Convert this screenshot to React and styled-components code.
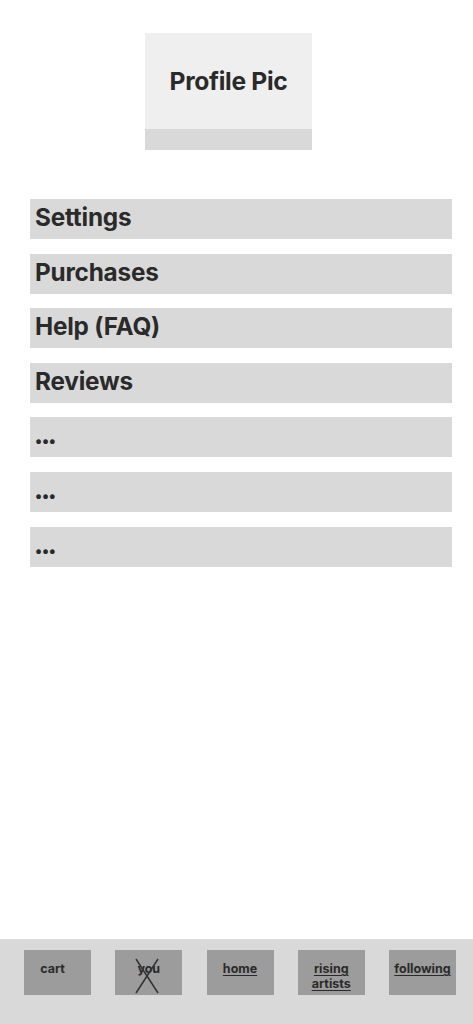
import React from "react";
import styled, { createGlobalStyle } from "styled-components";

const Global = createGlobalStyle`
  html, body {
    margin: 0;
    padding: 0;
    background: #ffffff;
    font-family: Inter, "Liberation Sans", sans-serif;
    color: #2a2a2a;
  }
`;

const Page = styled.div`
  width: 473px;
  height: 1024px;
  display: flex;
  flex-direction: column;
  overflow: hidden;
`;

const Main = styled.main`
  flex: 1;
  display: flex;
  flex-direction: column;
  align-items: flex-start;
  padding-top: 33px;
`;

const PicCard = styled.div`
  width: 167px;
  margin-left: 145px;
  display: flex;
  flex-direction: column;
`;

const PicArea = styled.div`
  height: 96px;
  background: #efefef;
  display: flex;
  align-items: center;
  justify-content: center;
  font-size: 24.6px;
  font-weight: 700;
  letter-spacing: -0.3px;
`;

const PicFooter = styled.div`
  height: 21px;
  background: #d9d9d9;
`;

const Menu = styled.ul`
  list-style: none;
  margin: 49px 0 0 30px;
  padding: 0;
  width: 422px;
  display: flex;
  flex-direction: column;
  gap: 14.6px;
`;

const MenuItem = styled.li`
  height: 40px;
  background: #d9d9d9;
  box-sizing: border-box;
  padding: 0 5px;
  display: flex;
  align-items: ${(p) => (p.more ? "flex-end" : "center")};
  padding-bottom: ${(p) => (p.more ? "9px" : "4px")};
  font-size: 24.3px;
  font-weight: 700;
  letter-spacing: -0.2px;
`;

const Dots = styled.span`
  font-size: 15px;
  line-height: 1;
`;

const NavBar = styled.nav`
  height: 85px;
  background: #d9d9d9;
  display: flex;
  align-items: flex-start;
  padding: 11px 17px 0 24px;
  box-sizing: border-box;
  gap: 24.25px;
`;

const NavButton = styled.div`
  position: relative;
  width: 67px;
  height: 45px;
  background: #9c9c9c;
  box-sizing: border-box;
  padding-top: 11px;
  text-align: center;
  font-size: 12.5px;
  font-weight: 700;
  line-height: 15px;
  text-decoration: ${(p) => (p.link ? "underline" : "none")};
  text-underline-offset: 2px;
  text-decoration-thickness: 1px;
`;

const Cross = styled.svg`
  position: absolute;
  left: 19px;
  top: 8px;
`;

const items = ["Settings", "Purchases", "Help (FAQ)", "Reviews"];

export default function App() {
  return (
    <Page>
      <Global />
      <Main>
        <PicCard>
          <PicArea>Profile Pic</PicArea>
          <PicFooter />
        </PicCard>
        <Menu>
          {items.map((t) => (
            <MenuItem key={t}>{t}</MenuItem>
          ))}
          {[0, 1, 2].map((i) => (
            <MenuItem key={"m" + i} more>
              <Dots>•••</Dots>
            </MenuItem>
          ))}
        </Menu>
      </Main>
      <NavBar>
        <NavButton style={{ paddingRight: 10 }}>cart</NavButton>
        <NavButton>
          you
          <Cross width="26" height="36" viewBox="0 0 26 36">
            <line x1="2" y1="1" x2="24" y2="35" stroke="#333" strokeWidth="1.5" />
            <line x1="24" y1="1" x2="2" y2="35" stroke="#333" strokeWidth="1.5" />
          </Cross>
        </NavButton>
        <NavButton link>home</NavButton>
        <NavButton link>rising artists</NavButton>
        <NavButton link>following</NavButton>
      </NavBar>
    </Page>
  );
}
